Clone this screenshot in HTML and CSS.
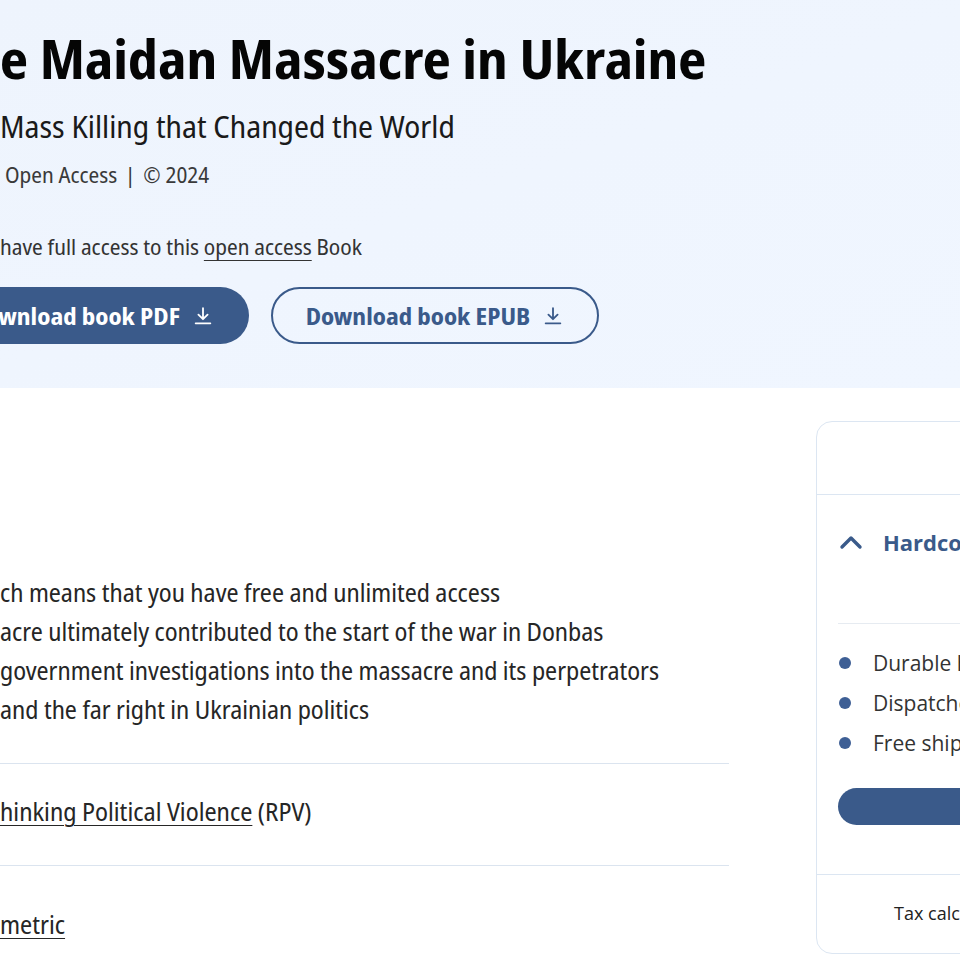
FILE: index.html
```html
<!DOCTYPE html>
<html lang="en">
<head>
<meta charset="utf-8">
<title>The Maidan Massacre in Ukraine</title>
<link rel="stylesheet" href="styles.css">
</head>
<body>
<header class="hero">
  <h1 class="title">e Maidan Massacre in Ukraine</h1>
  <p class="subtitle">Mass Killing that Changed the World</p>
  <p class="meta">Open Access <span class="sep">|</span> © 2024</p>
  <p class="access">have full access to this <a href="#" class="link">open access</a> Book</p>
  <div class="actions">
    <a href="#" class="btn btn-solid"><span class="btn-label">wnload book PDF</span>
      <svg class="dl" viewBox="0 0 24 24" width="22" height="22"><path d="M12 3.5v11.5M7 10.5l5 5 5-5M4 20h16" fill="none" stroke="currentColor" stroke-width="2" stroke-linecap="round" stroke-linejoin="round"/></svg>
    </a>
    <a href="#" class="btn btn-outline"><span class="btn-label">Download book EPUB</span>
      <svg class="dl" viewBox="0 0 24 24" width="22" height="22"><path d="M12 3.5v11.5M7 10.5l5 5 5-5M4 20h16" fill="none" stroke="currentColor" stroke-width="2" stroke-linecap="round" stroke-linejoin="round"/></svg>
    </a>
  </div>
</header>

<div class="layout">
  <main class="main">
    <ul class="points">
      <li>ch means that you have free and unlimited access</li>
      <li>acre ultimately contributed to the start of the war in Donbas</li>
      <li>government investigations into the massacre and its perpetrators</li>
      <li>and the far right in Ukrainian politics</li>
    </ul>
    <div class="row row-first"><a href="#" class="link">hinking Political Violence</a> (RPV)</div>
    <div class="row row-second"><a href="#" class="link">metric</a></div>
  </main>

  <aside class="card">
    <div class="card-top"></div>
    <div class="card-body">
      <div class="format">
        <svg class="chev" viewBox="0 0 24 16" width="24" height="16"><path d="M3 13l9-9 9 9" fill="none" stroke="currentColor" stroke-width="3.4" stroke-linecap="round" stroke-linejoin="round"/></svg>
        <span class="format-name">Hardcover Book</span>
      </div>
      <ul class="features">
        <li>Durable hardcover edition</li>
        <li>Dispatched in 3 to 5 business days</li>
        <li>Free shipping worldwide</li>
      </ul>
      <a href="#" class="buy"><span class="buy-label">Buy Hardcover Book</span></a>
    </div>
    <div class="card-foot">Tax calculation will be finalised at checkout</div>
  </aside>
</div>
</body>
</html>
```
FILE: styles.css
```css
html, body {
  margin: 0;
  padding: 0;
  overflow: hidden;
  background: #ffffff;
}
body {
  width: 960px;
  height: 960px;
  font-family: "Open Sans", "Noto Sans", sans-serif;
  color: #222222;
}
a { color: inherit; text-decoration: none; }

.link {
  text-decoration: underline;
  text-decoration-thickness: 1px;
  text-underline-offset: 4px;
}

/* ---------- hero ---------- */
.hero {
  height: 388px;
  box-sizing: border-box;
  padding-top: 27px;
  background: linear-gradient(160deg, #eef4fd 0%, #f0f6ff 100%);
  font-family: "Noto Sans Display", "Open Sans", sans-serif;
  font-stretch: 75%;
}
.title {
  margin: 0;
  font-size: 53.5px;
  line-height: 64px;
  font-weight: 700;
  color: #050505;
  white-space: nowrap;
}
.subtitle {
  margin: 15px 0 0;
  font-size: 30.8px;
  line-height: 40px;
  color: #1a1a1a;
}
.meta {
  margin: 14px 0 0 5px;
  font-size: 22px;
  line-height: 28px;
  color: #3a3a3a;
}
.sep { margin: 0 3px; }
.access {
  margin: 44px 0 0;
  font-size: 22px;
  line-height: 28px;
  color: #333333;
}
.access .link { text-underline-offset: 5px; }
.actions {
  display: flex;
  gap: 22px;
  margin-top: 27px;
}
.btn {
  display: flex;
  align-items: center;
  gap: 12px;
  height: 57px;
  box-sizing: border-box;
  border-radius: 29px;
  font-size: 24px;
  font-weight: 700;
  white-space: nowrap;
  flex: none;
}
.btn-label { flex: none; }
.btn-solid {
  background: #3a5a8a;
  color: #ffffff;
  padding: 0 35px 0 0;
  border-radius: 0 29px 29px 0;
  width: 249px;
  justify-content: flex-end;
}
.btn-outline {
  border: 2px solid #3a5a8a;
  color: #3a5a8a;
  padding: 0 30px;
  width: 328px;
  justify-content: center;
}
.dl { flex: none; }

/* ---------- content ---------- */
.layout {
  display: flex;
  align-items: flex-start;
}
.main {
  width: 729px;
  flex: none;
  font-family: "Noto Sans Display", "Open Sans", sans-serif;
  font-stretch: 75%;
}
.points {
  list-style: none;
  margin: 185px 0 0;
  padding: 0;
  font-size: 24.8px;
  line-height: 39px;
  color: #262626;
  white-space: nowrap;
}
.row {
  border-top: 1px solid #dbe4ef;
  font-size: 25px;
  line-height: 39px;
  color: #262626;
}
.row-first {
  margin-top: 34px;
  padding: 28px 0 34px;
}
.row-second {
  padding: 39px 0 20px;
}

/* ---------- card ---------- */
.card {
  flex: none;
  width: 320px;
  margin: 33px 0 0 87px;
  border: 1px solid #dce6f2;
  border-radius: 16px;
  background: #ffffff;
}
.card-top {
  height: 72px;
  border-bottom: 1px solid #dce6f2;
}
.card-body {
  padding: 0 0 0 21px;
}
.format {
  display: flex;
  align-items: center;
  gap: 20px;
  height: 67px;
  padding: 13px 0 48px 1px;
  border-bottom: 1px solid #e6ebf1;
  color: #3a5a8a;
}
.chev { flex: none; }
.format-name {
  font-size: 22px;
  font-weight: 700;
  white-space: nowrap;
}
.features {
  list-style: none;
  margin: 19px 0 0;
  padding: 0;
  font-size: 21px;
  line-height: 40px;
  color: #333333;
  white-space: nowrap;
}
.features li {
  display: flex;
  align-items: center;
  gap: 22px;
}
.features li::before {
  content: "";
  width: 12px;
  height: 12px;
  margin-left: 1px;
  border-radius: 50%;
  background: #3e5f95;
  flex: none;
}
.buy {
  display: flex;
  align-items: center;
  justify-content: center;
  margin-top: 25px;
  height: 37px;
  border-radius: 19px 0 0 19px;
  background: #3a5a8a;
  color: #ffffff;
  font-size: 20px;
  font-weight: 700;
  white-space: nowrap;
}
.buy-label {
  padding-left: 330px;
}
.card-foot {
  margin-top: 49px;
  border-top: 1px solid #dce6f2;
  padding: 24px 0 26px 77px;
  font-size: 18px;
  line-height: 28px;
  color: #222222;
  white-space: nowrap;
}
```
